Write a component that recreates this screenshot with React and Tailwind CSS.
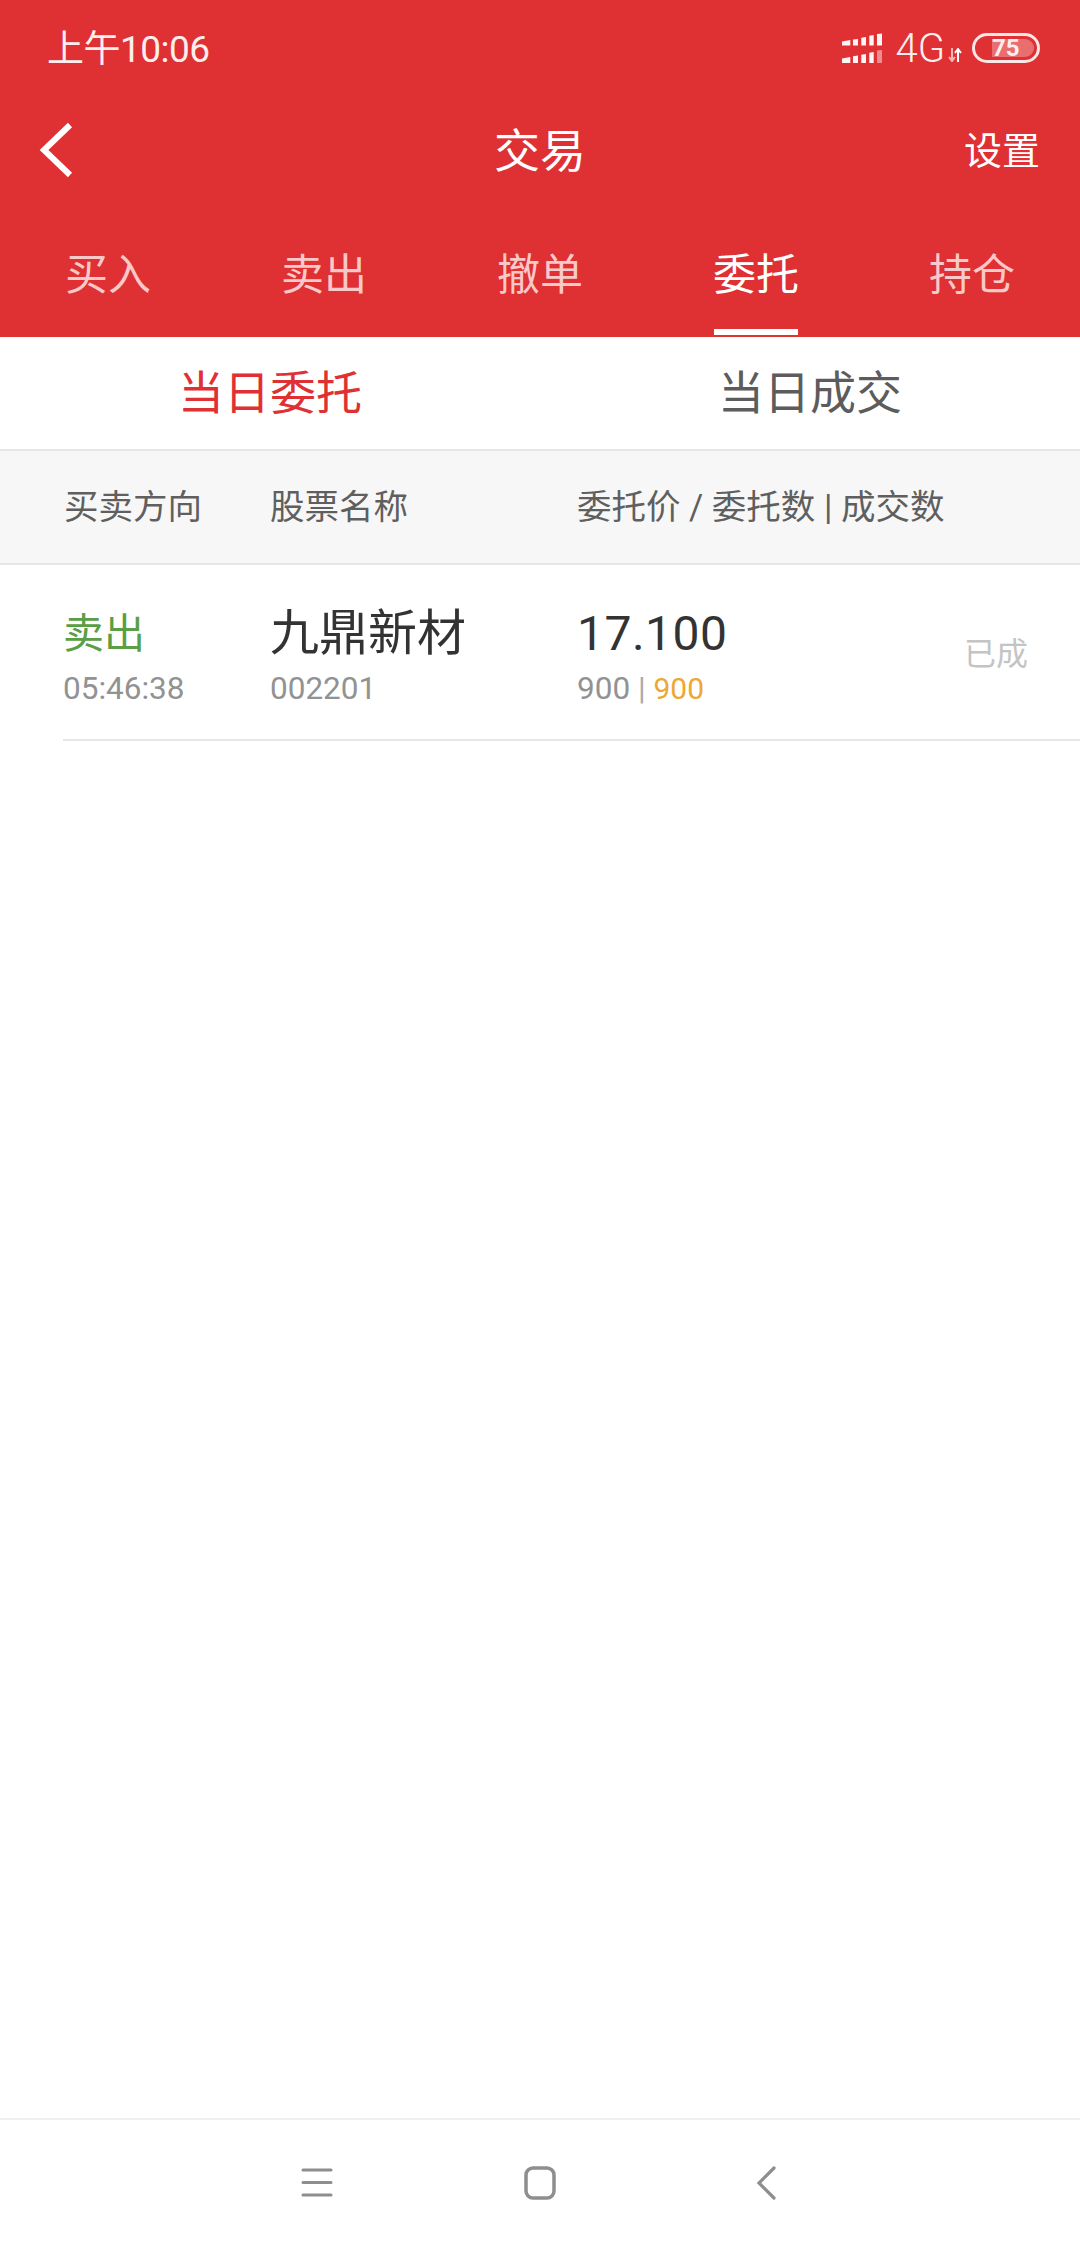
import React from "react";

const tabs = ["买入", "卖出", "撤单", "委托", "持仓"];

const StatusBar = () => (
  <div className="h-[98px] flex items-center justify-between pl-[47px] pr-[39px] text-white">
    <span className="mt-[2px] text-[37px] tracking-[-0.5px] text-[#fdeeee]">上午10:06</span>
    <div className="flex items-center mr-[1px] -mt-[2px]">
      <svg width="40" height="31" viewBox="0 0 40 31" fill="#fff">
        <path d="M0 8.500L8.300 7v5.600H0zM11 6.600L16 6v6.600h-5zM19.300 4.800L24 4v8.600h-4.700zM27.300 2.800L31.700 2v10.600h-4.400zM35 1l5-.5v12.100h-5z" fillOpacity="0.95" />
        <path d="M0 25.500L8.300 24v6H0zM11 23.200l5-.7V30h-5zM19.300 21.800L24 21v9h-4.700zM27.300 19.800L31.700 19v11h-4.400z" fillOpacity="0.95" />
        <path d="M35 17.500l5-.5v13h-5z" fillOpacity="0.45" />
      </svg>
      <span className="ml-[13px] text-[40px] leading-none font-light text-[#fdeeee] mt-[2px]">4G</span>
      <svg className="ml-[3px] mt-[14px]" width="14" height="14" viewBox="0 0 14 14" fill="none" strokeWidth="2">
        <path d="M4 0v13M1 9l3 4 3-4" stroke="#f6b7b7" />
        <path d="M10 14V1M7 5l3-4 3 4" stroke="#fff" />
      </svg>
      <div className="ml-[10px] w-[68px] h-[30px] rounded-full border-[3px] border-[#fde6e6] flex items-center p-[3px] pl-[17px]">
        <div className="relative flex-1 h-full rounded-r-full bg-white/30 flex items-center">
          <span className="text-[24px] leading-none font-bold text-[#fdeeee]">75</span>
        </div>
      </div>
    </div>
  </div>
);

const TitleBar = () => (
  <div className="relative h-[104px] pt-[3px] flex items-center justify-center text-white">
    <svg className="absolute left-[36px] top-[22px]" width="40" height="60" viewBox="0 0 40 60" fill="none" stroke="#fff" strokeWidth="6">
      <path d="M34 5L8 30l26 25" />
    </svg>
    <span className="text-[46px]">交易</span>
    <span className="absolute right-[40px] text-[38px]">设置</span>
  </div>
);

const TabBar = () => (
  <div className="h-[135px] flex">
    {tabs.map((t) => (
      <div key={t} className="relative flex-1 flex items-center justify-center pt-[12px]">
        <span className={t === "委托" ? "text-[43px] text-white" : "text-[43px] text-[#f9c8c8]"}>{t}</span>
        {t === "委托" && <div className="absolute bottom-[2px] w-[84px] h-[6px] bg-white" />}
      </div>
    ))}
  </div>
);

const NavBar = () => (
  <div className="h-[130px] border-t-2 border-[#efefef] relative flex items-center">
    <svg className="absolute left-[300px] top-[47px]" width="36" height="32" viewBox="0 0 36 32" stroke="#8e8e8e" strokeWidth="3" strokeLinecap="round">
      <path d="M3 3h28M3 15.500h28M3 28h28" />
    </svg>
    <svg className="absolute left-[522px] top-[45px]" width="36" height="36" viewBox="0 0 36 36" fill="none" stroke="#8e8e8e" strokeWidth="3.500">
      <rect x="4" y="3" width="28" height="30" rx="7" />
    </svg>
    <svg className="absolute left-[754px] top-[45px]" width="26" height="36" viewBox="0 0 26 36" fill="none" stroke="#8e8e8e" strokeWidth="3.200" strokeLinecap="round">
      <path d="M20 3L5 18l15 15" />
    </svg>
  </div>
);

export default function App() {
  return (
    <div
      className="w-[1080px] h-[2248px] bg-white flex flex-col"
      style={{ fontFamily: 'Roboto, "Noto Sans CJK SC", sans-serif' }}
    >
      <div className="bg-[#df3033]">
        <StatusBar />
        <TitleBar />
        <TabBar />
      </div>

      <div className="h-[112px] flex text-[46px] leading-none">
        <div className="flex-1 flex items-center justify-center text-[#df3033]">当日委托</div>
        <div className="flex-1 flex items-center justify-center text-[#5c5c5c]">当日成交</div>
      </div>

      <div className="h-[116px] bg-[#f7f7f7] border-y-2 border-[#e6e6e6] flex items-center text-[34.500px] text-[#5f5f5f] leading-none">
        <div className="w-[270px] pl-[64px]">买卖方向</div>
        <div className="w-[307px]">股票名称</div>
        <div>委托价 / 委托数 | 成交数</div>
      </div>

      <div className="ml-[63px] h-[176px] pt-[13px] border-b-2 border-[#e6e6e6] flex items-center">
        <div className="w-[207px] flex flex-col">
          <span className="text-[41px] leading-[56px] text-[#5a9e45]">卖出</span>
          <span className="mt-[5px] text-[31.500px] leading-[44px] text-[#929292]">05:46:38</span>
        </div>
        <div className="w-[307px] flex flex-col">
          <span className="text-[49px] leading-[56px] text-[#333]">九鼎新材</span>
          <span className="mt-[5px] text-[31.500px] leading-[44px] text-[#929292]">002201</span>
        </div>
        <div className="flex-1 flex flex-col">
          <span className="text-[48px] leading-[56px] text-[#333] tracking-[0.5px]">17.100</span>
          <span className="mt-[5px] text-[31.500px] leading-[44px] text-[#929292]">
            900 <span className="text-[#aaa]">|</span> <span className="text-[#eda733] text-[30px]">900</span>
          </span>
        </div>
        <span className="mr-[52px] mb-[10px] text-[32px] text-[#c4c4c4]">已成</span>
      </div>

      <div className="flex-1" />
      <NavBar />
    </div>
  );
}
